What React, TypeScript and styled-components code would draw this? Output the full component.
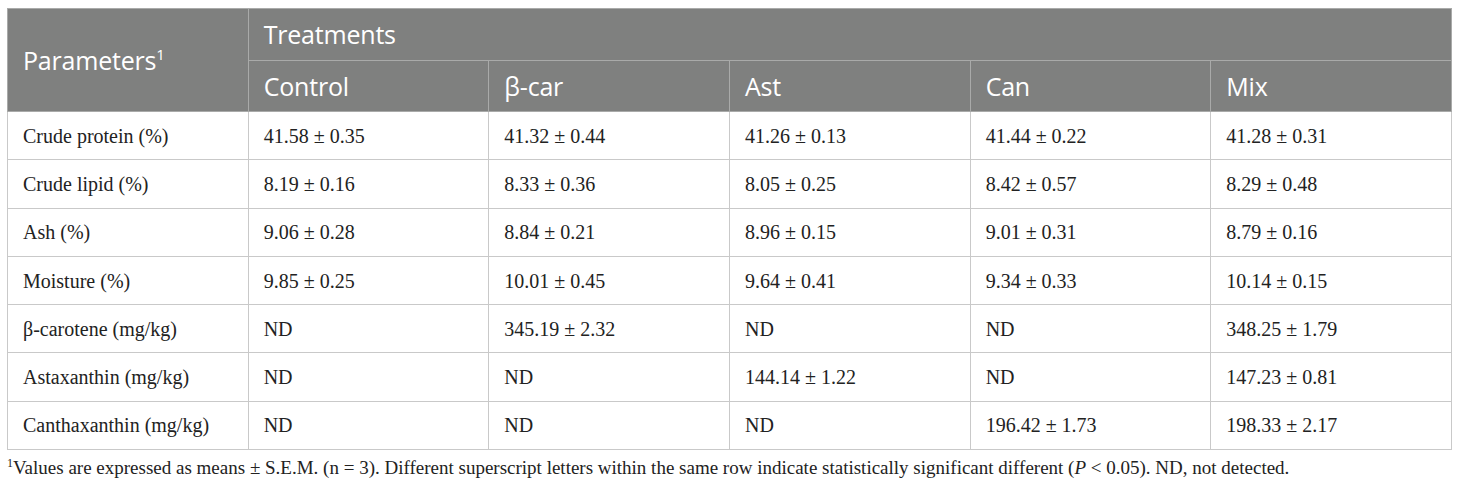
import React from "react";
import styled, { createGlobalStyle } from "styled-components";

const Global = createGlobalStyle`
  html, body { margin: 0; padding: 0; background: #ffffff; }
`;

const Page = styled.div`
  padding: 8px 8px 0 7px;
  width: 1460px;
  box-sizing: border-box;
`;

const Table = styled.table`
  width: 1445px;
  border-collapse: collapse;
  table-layout: fixed;
  border: 1px solid #c9c9c9;
`;

const HeadCell = styled.th<{ $h?: number }>`
  background: #7f807f;
  color: #ffffff;
  font-family: "Open Sans", "Noto Sans", sans-serif;
  font-weight: 400;
  font-size: 25px;
  letter-spacing: -0.2px;
  text-align: left;
  padding: 0 15px;
  height: ${(p) => p.$h ?? 51}px;
  box-sizing: border-box;
  border: 1px solid #a9aaa9;
  vertical-align: middle;
  line-height: 1;
`;

const Sup = styled.sup`
  font-size: 15px;
  vertical-align: 10px;
  line-height: 0;
`;

const Cell = styled.td`
  font-family: "Liberation Serif", "Times New Roman", serif;
  font-size: 20px;
  color: #222;
  padding: 0 15px;
  height: 48.3px;
  box-sizing: border-box;
  border: 1px solid #c9c9c9;
  vertical-align: middle;
  line-height: 1;
`;

const Note = styled.p`
  margin: 7px 0 0 0;
  font-family: "Liberation Serif", "Times New Roman", serif;
  font-size: 19px;
  color: #222;
`;

const NoteSup = styled.sup`
  font-size: 12px;
  vertical-align: 7px;
  line-height: 0;
`;

const rows: string[][] = [
  ["Crude protein (%)", "41.58 ± 0.35", "41.32 ± 0.44", "41.26 ± 0.13", "41.44 ± 0.22", "41.28 ± 0.31"],
  ["Crude lipid (%)", "8.19 ± 0.16", "8.33 ± 0.36", "8.05 ± 0.25", "8.42 ± 0.57", "8.29 ± 0.48"],
  ["Ash (%)", "9.06 ± 0.28", "8.84 ± 0.21", "8.96 ± 0.15", "9.01 ± 0.31", "8.79 ± 0.16"],
  ["Moisture (%)", "9.85 ± 0.25", "10.01 ± 0.45", "9.64 ± 0.41", "9.34 ± 0.33", "10.14 ± 0.15"],
  ["β-carotene (mg/kg)", "ND", "345.19 ± 2.32", "ND", "ND", "348.25 ± 1.79"],
  ["Astaxanthin (mg/kg)", "ND", "ND", "144.14 ± 1.22", "ND", "147.23 ± 0.81"],
  ["Canthaxanthin (mg/kg)", "ND", "ND", "ND", "196.42 ± 1.73", "198.33 ± 2.17"],
];

const treatments = ["Control", "β-car", "Ast", "Can", "Mix"];

export default function App() {
  return (
    <>
      <Global />
      <Page>
        <Table>
          <thead>
            <tr>
              <HeadCell rowSpan={2}>
                Parameters<Sup>1</Sup>
              </HeadCell>
              <HeadCell colSpan={5} $h={52}>Treatments</HeadCell>
            </tr>
            <tr>
              {treatments.map((t) => (
                <HeadCell key={t}>{t}</HeadCell>
              ))}
            </tr>
          </thead>
          <tbody>
            {rows.map((r) => (
              <tr key={r[0]}>
                {r.map((c, i) => (
                  <Cell key={i}>{c}</Cell>
                ))}
              </tr>
            ))}
          </tbody>
        </Table>
        <Note>
          <NoteSup>1</NoteSup>Values are expressed as means ± S.E.M. (n = 3). Different superscript letters within the same row indicate statistically significant different (<i>P</i> &lt; 0.05). ND, not detected.
        </Note>
      </Page>
    </>
  );
}
